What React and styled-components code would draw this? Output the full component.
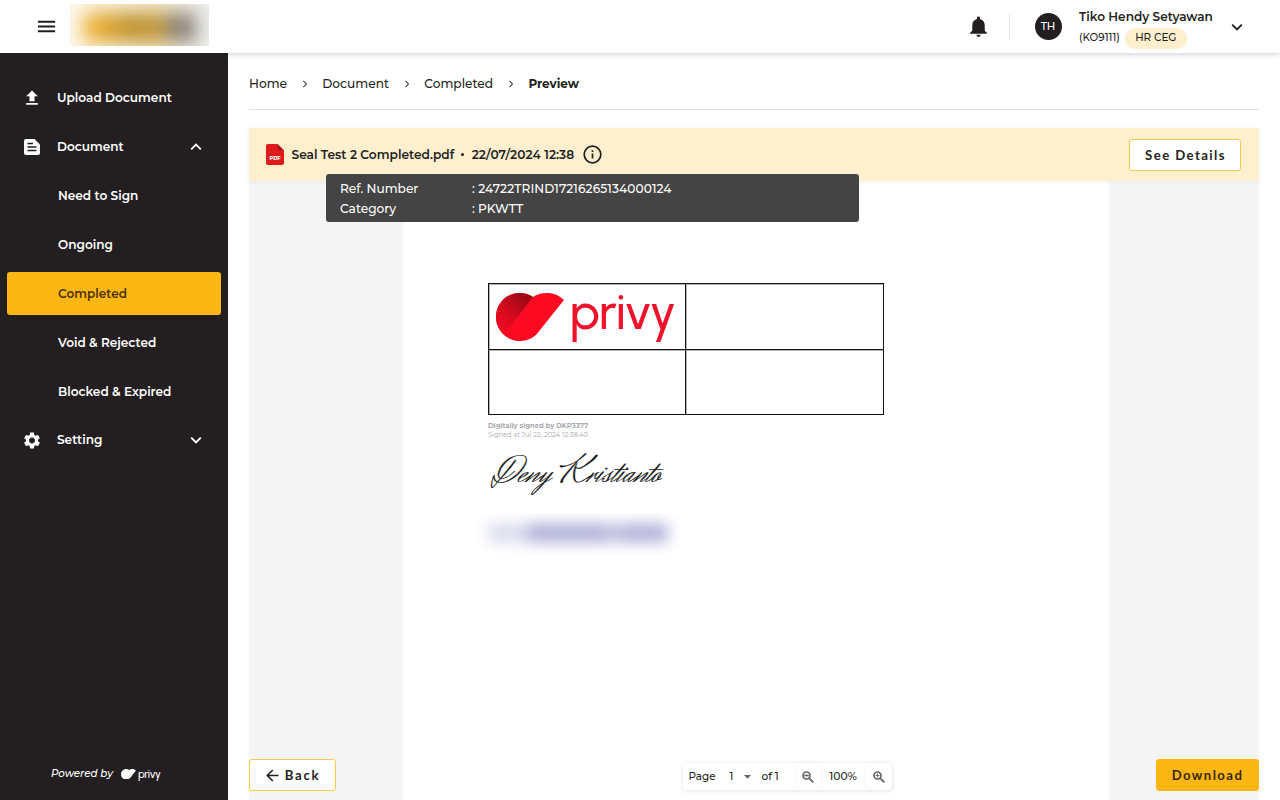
import React from "react";
import styled, { createGlobalStyle } from "styled-components";
import { MdMenu, MdNotifications, MdUpload, MdSettings, MdArrowDropDown } from "react-icons/md";

const Global = createGlobalStyle`
  *, *::before, *::after { box-sizing: border-box; }
  html, body { margin: 0; padding: 0; }
  body {
    font-family: Montserrat, Inter, "Liberation Sans", sans-serif;
    font-size: 12.2px;
    color: #231f20;
    background: #fff;
    overflow: hidden;
  }
`;

const Shell = styled.div`
  display: flex;
  flex-direction: column;
  width: 1280px;
  height: 800px;
  overflow: hidden;
`;

const Label = styled.span`
  display: inline-block;
  white-space: nowrap;
  font-size: ${(p) => p.$size || 12.2}px;
  font-weight: ${(p) => p.$weight || 400};
  letter-spacing: ${(p) => p.$track || 0}px;
  line-height: ${(p) => p.$line || 16}px;
`;

/* Header */
const Header = styled.header`
  position: relative;
  z-index: 3;
  flex: none;
  display: flex;
  align-items: center;
  height: 53px;
  padding: 0 37px 0 35px;
  background: #fff;
  box-shadow: 0 1px 6px rgba(0, 0, 0, 0.2);
`;
const Brand = styled.div`
  width: 139px;
  height: 42px;
  margin: -3px 0 0 12px;
  overflow: hidden;
  background: linear-gradient(90deg, #fdf8ea, #f4e8c9 60%, #ededed);
`;
const BrandBlur = styled.div`
  width: 112px;
  height: 29px;
  margin: 9px 0 0 14px;
  filter: blur(9px);
  background: linear-gradient(90deg, #f2b83a 0, #dfa630 20%, #bd912f 42%, #c59a40 70%, #8b8475 78%, #878481 100%);
`;
const HeaderRight = styled.div`
  display: flex;
  align-items: center;
  margin-left: auto;
`;
const Divider = styled.div`
  width: 1px;
  height: 26px;
  margin: 0 25px 0 18px;
  background: #e6e6e6;
`;
const Avatar = styled.div`
  display: flex;
  align-items: center;
  justify-content: center;
  width: 27px;
  height: 27px;
  border-radius: 50%;
  background: #231f20;
  color: #fff;
`;
const User = styled.div`
  display: flex;
  flex-direction: column;
  width: 134px;
  margin: 4px 18px 0 17.5px;
`;
const UserMeta = styled.div`
  display: flex;
  align-items: center;
  gap: 5px;
  height: 21px;
  margin-top: 3px;
`;
const Role = styled.span`
  display: flex;
  align-items: center;
  justify-content: center;
  width: 62px;
  height: 21px;
  border-radius: 11px;
  background: #feefcf;
`;

/* Sidebar */
const Body = styled.div`
  display: flex;
  flex: 1;
  min-height: 0;
`;
const Sidebar = styled.nav`
  display: flex;
  flex-direction: column;
  position: relative;
  z-index: 4;
  flex: none;
  width: 228px;
  padding: 23px 7px 18px;
  background: #231f20;
  color: #fff;
`;
const Menu = styled.div`
  display: flex;
  flex-direction: column;
  gap: 5.9px;
`;
const MenuItem = styled.div`
  display: flex;
  align-items: center;
  height: 43px;
  padding: 1.400px 19px 0 ${(p) => (p.$child ? 51 : 15)}px;
  border-radius: 3px;
  background: ${(p) => (p.$active ? "#fdb714" : "transparent")};
  color: ${(p) => (p.$active ? "#4a3000" : "#fff")};
`;
const MenuIcon = styled.span`
  display: flex;
  justify-content: center;
  width: 20px;
  margin-right: 15px;
`;
const MenuChevron = styled.span`
  display: flex;
  margin-left: auto;
`;
const Powered = styled.div`
  display: flex;
  align-items: center;
  gap: 8px;
  margin-top: auto;
  padding-left: 44px;
  font-style: italic;
`;
const PoweredLogo = styled.div`
  display: flex;
  align-items: center;
  gap: 2px;
  font-style: normal;
`;
const Wordmark = styled.span`
  font-family: Urbanist, Montserrat, sans-serif;
  font-size: ${(p) => p.$size}px;
  font-weight: 500;
  line-height: 1;
  letter-spacing: ${(p) => p.$track}px;
  color: ${(p) => p.$color};
`;

/* Content */
const Main = styled.main`
  display: flex;
  flex-direction: column;
  flex: 1;
  padding: 0 21px;
`;
const Crumbs = styled.div`
  display: flex;
  align-items: center;
  flex: none;
  height: 57px;
  padding-top: 6px;
  margin-bottom: 18px;
  border-bottom: 1px solid #dedede;
`;
const CrumbArrow = styled.span`
  display: flex;
  justify-content: center;
  width: 35.3px;
  color: #444;
`;
const DocBar = styled.div`
  position: relative;
  z-index: 2;
  display: flex;
  align-items: center;
  flex: none;
  height: 53px;
  padding: 0 18px 0 17px;
  background: #feefcf;
  box-shadow: 0 1px 5px rgba(0, 0, 0, 0.06);
`;
const FileName = styled.div`
  display: flex;
  align-items: center;
  margin-left: 7.5px;
`;
const Dot = styled.span`
  width: 3px;
  height: 3px;
  margin: 0 8px 0 6.5px;
  border-radius: 50%;
  background: #231f20;
`;
const InfoWrap = styled.span`
  display: flex;
  margin-left: 8.5px;
`;
const Tooltip = styled.div`
  position: absolute;
  left: 77px;
  top: 46px;
  display: grid;
  grid-template-columns: 132px 1fr;
  grid-auto-rows: 20px;
  align-items: center;
  width: 533px;
  height: 48px;
  padding: 4.600px 14px;
  border-radius: 3px;
  background: #444;
  color: #fff;
`;
const Button = styled.button`
  display: flex;
  align-items: center;
  justify-content: center;
  gap: 6px;
  width: ${(p) => p.$width}px;
  height: 32px;
  padding: 0 0 0 ${(p) => (p.$primary ? 0 : 1)}px;
  border: 1px solid ${(p) => (p.$primary ? "#fdb714" : "#fbc84f")};
  border-radius: 3px;
  background: ${(p) => (p.$primary ? "#fdb714" : "#fff")};
  color: ${(p) => (p.$primary ? "#3a2708" : "#231f20")};
  font-family: Lato, sans-serif;
  font-size: 13.2px;
  font-weight: 700;
  letter-spacing: ${(p) => p.$track || 1.4}px;
`;
const Viewer = styled.div`
  position: relative;
  display: flex;
  flex: 1;
  padding: 0 150px 0 154px;
  background: #f5f5f5;
`;
const Page = styled.article`
  flex: 1;
  padding: 102px 0 0 85px;
  background: #fff;
`;
const SignTable = styled.div`
  display: grid;
  grid-template-columns: 196px 197px;
  grid-template-rows: 65px 64px;
  gap: 1px;
  width: 396px;
  height: 132px;
  padding: 1px;
  background: #111;
`;
const Cell = styled.div`
  display: flex;
  align-items: center;
  gap: 5.5px;
  padding-left: 7px;
  background: #fff;
  box-shadow: inset 1px 1px 0 #b5b5b5;
`;
const LogoText = styled.span`
  display: flex;
  margin-top: -9px;
`;
const SignNote = styled.div`
  display: flex;
  flex-direction: column;
  padding-top: 6px;
  color: #a8a8ac;
`;
const Signature = styled.div`
  width: 180px;
  height: 46px;
  margin: 11px 0 0 3px;
  font-family: "Herr Von Muellerhoff", "Liberation Serif", cursive;
  font-size: 37.9px;
  line-height: 46px;
  white-space: nowrap;
  color: #111;
  -webkit-text-stroke: 0.2px #111;
`;
const Redacted = styled.div`
  width: 204px;
  height: 40px;
  margin: 17px 0 0 -12px;
  padding: 9px 12px;
  overflow: hidden;
`;
const RedactedInk = styled.div`
  height: 20px;
  filter: blur(7px);
  background: linear-gradient(90deg, #dedeef 0, #dedeef 18%, #b3b3da 26%, #b3b3da 60%, #c4c4e2 70%, #b3b3da 82%, #b9b9dd 100%);
`;
const BottomBar = styled.div`
  position: absolute;
  left: 0;
  right: 0;
  bottom: 9px;
  display: flex;
  align-items: center;
  justify-content: space-between;
  height: 32px;
`;
const Pager = styled.div`
  display: flex;
  align-items: center;
  width: 209px;
  height: 27px;
  margin: 3px 0 0 82px;
  padding-left: 6px;
  border-radius: 4px;
  background: #fff;
  box-shadow: 0 1px 5px rgba(0, 0, 0, 0.1);
`;
const PagerCell = styled.span`
  display: flex;
  align-items: center;
  justify-content: ${(p) => p.$align || "flex-start"};
  width: ${(p) => p.$width}px;
  height: 27px;
  color: ${(p) => p.$color || "inherit"};
  box-shadow: ${(p) => (p.$raised ? "0 0 3px rgba(0,0,0,.06)" : "none")};
`;

const Chevron = ({ dir = "down", size = 12, width = 2, color = "currentColor" }) => {
  const d = { down: "M1.2 3.6 6 8.4l4.8-4.8", up: "M1.2 8.4 6 3.6l4.8 4.8", right: "M4 2.2 7.8 6 4 9.8" }[dir];
  return (
    <svg width={size} height={size} viewBox="0 0 12 12" fill="none" stroke={color} strokeWidth={width}>
      <path d={d} />
    </svg>
  );
};

const PrivyMark = ({ width, mono }) => (
  <svg width={width} height={(width * 48) / 68} viewBox="0 0 68 48">
    <defs>
      <linearGradient id="fold" x1="0.1" y1="0.9" x2="0.8" y2="0.2">
        <stop offset="0" stopColor="#f00a22" />
        <stop offset="0.45" stopColor="#d80a1e" />
        <stop offset="1" stopColor="#a00816" />
      </linearGradient>
    </defs>
    <path d="M24 0C10.500 0 0 10.500 0 24C0 37.500 10.500 48 24 48C33 48 39 44 44 37L68 7C63 2.500 58 0 51 0C45 0 41 1.500 37 4C33 1.500 29 0 24 0Z" fill={mono || "#fb0a22"} />
    {!mono && <path d="M24 0C10.500 0 0 10.500 0 24C0 31 3 37 8 41L37 4C33 1.500 29 0 24 0Z" fill="url(#fold)" />}
  </svg>
);

const DocIcon = () => (
  <svg width="18" height="18" viewBox="0 0 18 18">
    <path d="M3 1h8.500L17 6.500V15a2 2 0 0 1-2 2H3a2 2 0 0 1-2-2V3a2 2 0 0 1 2-2Z" fill="#fff" />
    <path d="M4.500 5.500h5.500M4.500 9h9M4.500 12.500h9" stroke="#231f20" strokeWidth="1.700" />
  </svg>
);

const PdfIcon = () => (
  <svg width="18" height="21" viewBox="0 0 18 21">
    <path d="M2 0h9.500L18 6.500V19a2 2 0 0 1-2 2H2a2 2 0 0 1-2-2V2A2 2 0 0 1 2 0Z" fill="#df1b1b" />
    <path d="M11.500 0 18 6.500h-4.500a2 2 0 0 1-2-2Z" fill="#a91515" />
    <text x="9" y="16.300" textAnchor="middle" fontFamily="Montserrat, sans-serif" fontSize="5" fontWeight="800" fill="#fff">PDF</text>
  </svg>
);

const InfoIcon = () => (
  <svg width="19" height="19" viewBox="0 0 19 19" fill="none" stroke="#231f20" strokeWidth="1.700">
    <circle cx="9.500" cy="9.500" r="8.300" />
    <path d="M9.500 8.600v5M9.500 5.200v1.800" />
  </svg>
);

const BackArrow = () => (
  <svg width="13" height="13" viewBox="0 0 13 13" fill="none" stroke="currentColor" strokeWidth="1.600">
    <path d="M12.500 6.500H1.500M6.800 1 1.300 6.500l5.500 5.500" />
  </svg>
);

const Magnifier = ({ plus }) => (
  <svg width="12" height="12" viewBox="0 0 12 12" fill="none" stroke="currentColor">
    <circle cx="4.500" cy="4.500" r="3.500" strokeWidth="1.700" />
    <path d="M7.300 7.300 11.300 11.300" strokeWidth="1.900" />
    <path d={plus ? "M2.700 4.500h3.600M4.500 2.700v3.600" : "M2.300 4.500h4.400"} strokeWidth={plus ? 1 : 1.7} />
  </svg>
);

const MENU = [
  { text: "Upload Document", icon: <MdUpload size={20} /> },
  { text: "Document", icon: <DocIcon />, chevron: "up" },
  { text: "Need to Sign", child: true },
  { text: "Ongoing", child: true },
  { text: "Completed", child: true, active: true },
  { text: "Void & Rejected", child: true },
  { text: "Blocked & Expired", child: true },
  { text: "Setting", icon: <MdSettings size={21} />, chevron: "down" },
];

export default function App() {
  return (
    <Shell>
      <Global />
      <Header>
        <MdMenu size={23} />
        <Brand><BrandBlur /></Brand>
        <HeaderRight>
          <MdNotifications size={25} />
          <Divider />
          <Avatar><Label $size={10.5} $weight={500}>TH</Label></Avatar>
          <User>
            <Label $weight={600} $size={12.1} $line={16}>Tiko Hendy Setyawan</Label>
            <UserMeta>
              <Label $size={10.4} $weight={500}>(KO9111)</Label>
              <Role><Label $size={10.4} $weight={500}>HR CEG</Label></Role>
            </UserMeta>
          </User>
          <Chevron width={1.9} />
        </HeaderRight>
      </Header>
      <Body>
        <Sidebar>
          <Menu>
            {MENU.map((m) => (
              <MenuItem key={m.text} $child={m.child} $active={m.active}>
                {m.icon && <MenuIcon>{m.icon}</MenuIcon>}
                <Label $weight={600} $size={12.1}>{m.text}</Label>
                {m.chevron && <MenuChevron><Chevron dir={m.chevron} width={1.9} /></MenuChevron>}
              </MenuItem>
            ))}
          </Menu>
          <Powered>
            <Label $size={10.3} $weight={500}>Powered by</Label>
            <PoweredLogo>
              <PrivyMark width={15} mono="#fff" />
              <Wordmark $size={11} $track={-0.3} $color="#fff">privy</Wordmark>
            </PoweredLogo>
          </Powered>
        </Sidebar>
        <Main>
          <Crumbs>
            <Label $weight={500}>Home</Label>
            <CrumbArrow><Chevron dir="right" size={10} width={1.3} /></CrumbArrow>
            <Label $weight={500}>Document</Label>
            <CrumbArrow><Chevron dir="right" size={10} width={1.3} /></CrumbArrow>
            <Label $weight={500}>Completed</Label>
            <CrumbArrow><Chevron dir="right" size={10} width={1.3} /></CrumbArrow>
            <Label $weight={700} $size={12}>Preview</Label>
          </Crumbs>
          <DocBar>
            <PdfIcon />
            <FileName><Label $weight={600}>Seal Test 2 Completed.pdf</Label></FileName>
            <Dot />
            <Label $weight={600} $track={0.05}>22/07/2024 12:38</Label>
            <InfoWrap><InfoIcon /></InfoWrap>
            <HeaderRight><Button $width={112}>See Details</Button></HeaderRight>
            <Tooltip>
              <Label $weight={500}>Ref. Number</Label>
              <Label $weight={500} $track={0.09}>: 24722TRIND17216265134000124</Label>
              <Label $weight={500}>Category</Label>
              <Label $weight={500}>: PKWTT</Label>
            </Tooltip>
          </DocBar>
          <Viewer>
            <Page>
              <SignTable>
                <Cell>
                  <PrivyMark width={68} />
                  <LogoText><Wordmark $size={50} $track={-0.8} $color="#f0122a">privy</Wordmark></LogoText>
                </Cell>
                <Cell /><Cell /><Cell />
              </SignTable>
              <SignNote>
                <Label $size={6.8} $weight={700} $line={9}>Digitally signed by DKP3377</Label>
                <Label $size={6.7} $line={10}>Signed at Jul 22, 2024 12:38:40</Label>
              </SignNote>
              <Signature>Deny Kristianto</Signature>
              <Redacted><RedactedInk /></Redacted>
            </Page>
            <BottomBar>
              <Button $width={87} $track={1.7}><BackArrow />Back</Button>
              <Pager>
                <PagerCell $width={41}><Label $size={10.4} $weight={500}>Page</Label></PagerCell>
                <PagerCell $width={9}><Label $size={10.4} $weight={500}>1</Label></PagerCell>
                <PagerCell $width={23} $color="#666"><MdArrowDropDown size={17} /></PagerCell>
                <PagerCell $width={34}><Label $size={10.6} $weight={500}>of 1</Label></PagerCell>
                <PagerCell $width={25} $raised $align="center" $color="#666"><Magnifier /></PagerCell>
                <PagerCell $width={45} $align="center"><Label $size={10.8} $weight={500}>100%</Label></PagerCell>
                <PagerCell $width={26} $raised $align="center" $color="#666"><Magnifier plus /></PagerCell>
              </Pager>
              <Button $width={103} $primary>Download</Button>
            </BottomBar>
          </Viewer>
        </Main>
      </Body>
    </Shell>
  );
}
